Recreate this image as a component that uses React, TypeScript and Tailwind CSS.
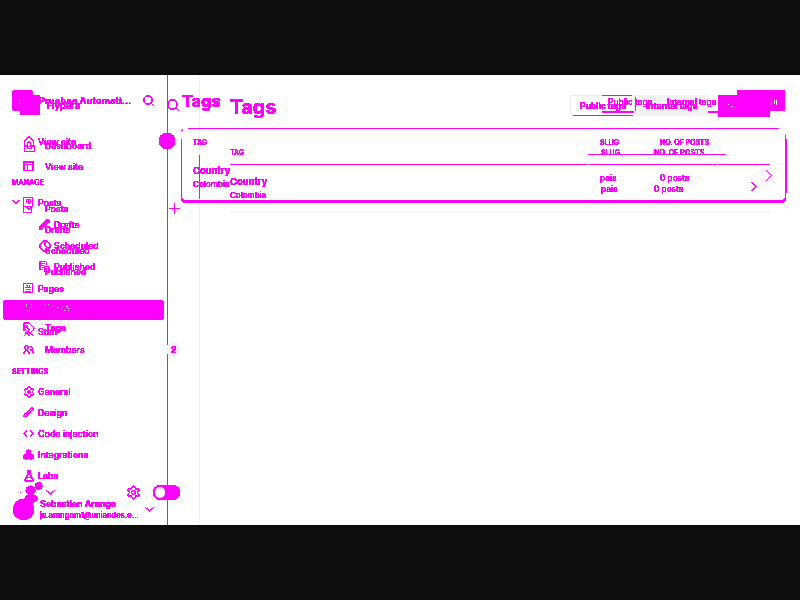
import React from 'react';
import {
  Brush, Clock, House, Search, Settings, Tag, Plus, FlaskConical,
} from 'lucide-react';

type RowProps = { icon?: React.ReactNode; label: string; sub?: boolean; lead?: React.ReactNode };

const Glyph = ({ d, size = 11 }: { d: string; size?: number }) => (
  <svg width={size} height={size} viewBox={`0 0 ${size} ${size}`} fill="none" stroke="currentColor" strokeWidth="1" shapeRendering="crispEdges">
    <path d={d} />
  </svg>
);

const PagesIcon = () => <Glyph d="M.5.5h9v9h-9zM2.500 2.500h2v2h-2M6.500 2v2.500M2 4.500h6M2.500 6.500h5M2 8h6" />;
const BrowserIcon = () => <Glyph d="M.5.5h10v9h-10zM.5 1.500h10M.5 3.500h10M4.500 3v7M1.500 1v9M9.500 1v9" />;
const PostsIcon = () => <Glyph d="M.5.5h9v9h-9zM3 2.500h5M3.500 4.500h4M4.500 6.500h2M5 3v4M3.500 3v3M7.500 3v3" />;
const EditIcon = () => <Glyph d="M.5 2v7.500h8v-5M3 4l3 3 4-4M3 3.500l3 3 4-4" />;
const PencilIcon = () => (
  <svg width="11" height="11" viewBox="0 0 11 11" fill="currentColor"><path d="M0 11V8L7 1Q9-1 10.500 1T10 3.500L3 10Z" /></svg>
);
const PublishedIcon = () => <Glyph d="M7.500 4V1M7 .5H.5v8H4M2 2.500h4M2 4.500h3M3 6.500h2M5.500 5.500h4v5h-4zM7 7.500h2M1.500 1v7" />;
const StaffIcon = () => (
  <svg width="12" height="12" viewBox="0 0 12 12" fill="none" stroke="currentColor"><path d="M1 5V2l2-1 3 2-1 3-3 1M1 10l3-3 2 3M7 7l3 2" /></svg>
);
const MembersIcon = () => (
  <svg width="12" height="11" viewBox="0 0 12 11" fill="none" stroke="currentColor" strokeWidth=".8"><path d="M3.500 1.500a1.500 2 0 1 1 0 4 1.500 2 0 1 1 0-4M1 9.500q0-3 2.500-3t2.500 3M7 2.500h1q1.500 0 1.500 1.500t-1.500 2H7M8 6q2.500 1 2.500 3.500" /></svg>
);
const CodeIcon = () => (
  <svg width="11" height="11" viewBox="0 0 11 11" fill="none" stroke="currentColor"><path d="M4 2L.8 5.500L4 9M7 2l3.200 3.500L7 9" /></svg>
);
const IntegrationsIcon = () => (
  <svg width="11" height="11" viewBox="0 0 11 11" fill="currentColor"><path d="M3 2l2.500-1.500L8 2v3l2.500 1.500v3L8 10.500 5.500 9 3 10.500.5 9.500v-3L3 5z" /></svg>
);
const DownIcon = ({ className = '' }: { className?: string }) => (
  <svg className={className} width="11" height="11" viewBox="0 0 11 11" fill="none" stroke="currentColor" strokeWidth=".9"><path d="M1.500 3.500L5.500 7L9.500 3.500" /></svg>
);
const SmallDownIcon = ({ className = '' }: { className?: string }) => (
  <svg className={className} width="11" height="11" viewBox="0 0 11 11" fill="none" stroke="currentColor"><path d="M3 3.500L6 6.500L9 3.500" /></svg>
);
const RightIcon = ({ className = '' }: { className?: string }) => (
  <svg className={`shrink-0 ${className}`} width="14" height="13" viewBox="0 0 14 13" fill="none" stroke="currentColor"><path d="M4.500 1.500L9.500 6.500L4.500 11.500" /></svg>
);

function Row({ icon, label, sub, lead }: RowProps) {
  return (
    <div className={`flex h-[21px] items-center ${sub ? 'pl-[39px]' : 'pl-[12px]'}`}>
      {!sub && <span className="flex w-[11px] shrink-0">{lead}</span>}
      <span className="flex w-[15px] shrink-0">{icon}</span>
      <span className="whitespace-nowrap">{label}</span>
    </div>
  );
}

function WideRow({ icon, label, trail, bold }: { icon?: React.ReactNode; label: string; trail?: React.ReactNode; bold?: boolean }) {
  return (
    <div className="flex h-[21px] items-center pl-[23px]">
      <span className="flex w-[22px] shrink-0">{icon}</span>
      <span className={`flex-1 whitespace-nowrap ${bold ? 'font-bold' : ''}`}>{label}</span>
      <span className="flex w-[32px] shrink-0">{trail}</span>
    </div>
  );
}

const Heading = ({ children }: { children: React.ReactNode }) => (
  <div className="flex h-[21px] items-center pl-[12px] pt-[3px] text-[7px] font-semibold tracking-[0.15px]">{children}</div>
);

function FirstLayout() {
  return (
    <div className="absolute inset-0 flex">
      <aside className="flex h-full w-[168px] shrink-0 flex-col border-r border-[#ff00ff]">
        <div className="flex h-[56px] shrink-0 items-start pl-[12px] pt-[15px]">
          <span className="h-[21px] w-[21px] rounded-[4px] bg-[#ff00ff]" />
          <span className="ml-[6px] mt-[4px] w-[103px] whitespace-nowrap text-[9px] font-bold leading-[13px] tracking-[0.25px]">Pruebas Automati...</span>
          <Search size={13} strokeWidth={1.7} className="mt-[4px]" />
        </div>
        <Row icon={<House size={12} strokeWidth={1.5} />} label="View site" />
        <div className="h-[19px]" />
        <Heading>MANAGE</Heading>
        <Row lead={<SmallDownIcon className="-ml-[2px]" />} icon={<PostsIcon />} label="Posts" />
        <div className="h-[1px]" />
        <Row sub icon={<PencilIcon />} label="Drafts" />
        <Row sub icon={<Clock size={12} strokeWidth={1.5} />} label="Scheduled" />
        <Row sub icon={<PublishedIcon />} label="Published" />
        <div className="h-[1px]" />
        <Row icon={<PagesIcon />} label="Pages" />
        <div className="mx-[3px] mt-[1px] h-[20px] shrink-0 rounded-[3px] bg-[#ff00ff]" />
        <div className="h-[1px]" />
        <Row icon={<StaffIcon />} label="Staff" />
        <div className="h-[18px]" />
        <Heading>SETTINGS</Heading>
        <Row icon={<Settings size={12} strokeWidth={1.4} />} label="General" />
        <Row icon={<Brush size={11} strokeWidth={1.7} />} label="Design" />
        <Row icon={<CodeIcon />} label="Code injection" />
        <Row icon={<IntegrationsIcon />} label="Integrations" />
        <Row icon={<FlaskConical size={12} strokeWidth={1.5} />} label="Labs" />
        <div className="flex h-[32px] shrink-0 items-center pl-[13px]">
          <span className="mt-[15px] h-[21px] w-[21px] shrink-0 rounded-full bg-[#ff00ff]" />
          <span className="ml-[5px] mt-[15px] flex w-[105px] flex-col">
            <span className="whitespace-nowrap pl-[1px] text-[8.9px] font-semibold leading-[12px]">Sebastian Arango</span>
            <span className="whitespace-nowrap pl-[1px] text-[7.7px] leading-[11px]">js.arangom1@uniandes.e...</span>
          </span>
          <DownIcon className="mt-[15px]" />
        </div>
      </aside>
      <main className="flex flex-1 flex-col pl-[13px] pr-[14px]">
        <div className="flex h-[53px] items-start pl-[1px]">
          <h1 className="w-[426px] pt-[15px] text-[16.5px] font-bold leading-[22px] tracking-[-0.2px]">Tags</h1>
          <span className="w-[59px] whitespace-nowrap pt-[21px] text-[8.5px] font-normal leading-[13px]">Public tags</span>
          <span className="w-[70px] whitespace-nowrap pt-[21px] text-[8.4px] font-normal leading-[13px]">Internal tags</span>
          <span className="mt-[15px] h-[21px] w-[48px] rounded-[1px] bg-[#ff00ff]" />
        </div>
        <div className="flex h-[75px] w-[605px] flex-col rounded-[5px] border border-b-[3px] border-[#ff00ff] px-[11px]">
          <div className="flex h-[26px] items-center pt-[2px] text-[7px] font-semibold">
            <span className="w-[407px]">TAG</span><span className="w-[60px]">SLUG</span><span>NO. OF POSTS</span>
          </div>
          <div className="flex h-[44px] items-center">
            <div className="w-[407px] shrink-0">
              <div className="text-[9.500px] font-semibold leading-[14px]">Country</div>
              <div className="text-[8.2px] font-normal leading-[13px]">Colombia</div>
            </div>
            <span className="w-[60px] shrink-0 pt-[2px] text-[8.5px] font-normal">pais</span>
            <span className="w-[102px] shrink-0 pt-[2px] text-[8.3px] font-normal">0 posts</span>
            <RightIcon className="-mt-[3px]" />
          </div>
        </div>
      </main>
    </div>
  );
}

function SecondLayout() {
  return (
    <div className="absolute inset-0 flex">
      <aside className="flex w-[199px] shrink-0 flex-col">
        <div className="flex h-[56px] items-start pl-[20px] pt-[20px]">
          <span className="h-[20px] w-[20px] rounded-[1px] bg-[#ff00ff]" />
          <span className="ml-[7px] mt-[4px] w-[119px] text-[9.500px] font-semibold leading-[13px]">Hypara</span>
          <Search size={14} strokeWidth={1.7} className="mt-[3px]" />
        </div>
        <div className="h-[4px]" />
        <WideRow icon={<Glyph size={12} d="M1 4v7.500h10v-7M1 5h3M8 5h3M4 5v3h4V5" />} label="Dashboard" />
        <WideRow icon={<BrowserIcon />} label="View site" />
        <div className="h-[21px]" />
        <WideRow icon={<EditIcon />} label="Posts" trail={<Plus size={15} strokeWidth={1.2} className="scale-110" />} />
        <WideRow label="Drafts" />
        <WideRow label="Scheduled" />
        <WideRow label="Published" />
        <div className="h-[35px]" />
        <WideRow icon={<Tag size={12} strokeWidth={1.7} />} label="Tags" bold />
        <div className="h-[1px]" />
        <WideRow icon={<MembersIcon />} label="Members" trail={<b className="ml-[4px] pt-[1px] text-[8.5px]">2</b>} />
        <div className="mt-[116px] flex h-[34px] items-center pl-[20px]">
          <svg width="26" height="26" viewBox="0 0 26 26" fill="#ff00ff"><circle cx="10.5" cy="10.500" r="4.7" /><circle cx="18.7" cy="5.8" r="3.6" /><path d="M3 20L7 15H15L18 19L12 24H3ZM0 12h1v1H0Z" /></svg>
          <DownIcon className="-ml-[1px] -mt-[1px]" />
          <Settings size={15} strokeWidth={1.4} className="-mt-[1px] ml-[70px]" />
          <span className="-mt-[1px] ml-[12px] flex h-[15px] w-[27px] rounded-full bg-[#ff00ff]" />
        </div>
      </aside>
      <main className="flex flex-1 flex-col pl-[31px] pr-[30px]">
        <div className="flex h-[72px] items-start">
          <h1 className="w-[350px] pt-[19px] text-[19.8px] font-bold leading-[26px] tracking-[-0.2px]">Tags</h1>
          <span className="w-[66px] whitespace-nowrap pt-[25px] text-[8.6px] font-semibold leading-[13px]">Public tags</span>
          <span className="w-[72px] whitespace-nowrap pt-[25px] text-[8.500px] font-semibold leading-[13px]">Internal tags</span>
          <span className="mt-[20px] h-[22px] w-[52px] bg-[#ff00ff]" />
        </div>
        <div className="flex h-[18px] items-start border-b border-[#ff00ff] text-[7px] font-medium leading-[11px]">
          <span className="w-[358px]">TAG</span>
          <span className="flex h-[8px] w-[138px] border-b border-[#ff00ff] pl-[13px]"><span className="w-[53px]">SLUG</span><span className="whitespace-nowrap tracking-[0.1px]">NO. OF POSTS</span></span>
        </div>
        <div className="flex h-[46px] items-center">
          <div className="w-[371px] pt-[1px]">
            <div className="text-[9.500px] font-semibold leading-[14px]">Country</div>
            <div className="text-[8px] font-medium leading-[13px]">Colombia</div>
          </div>
          <span className="w-[53px] pt-[2px] text-[8.5px] font-normal">pais</span>
          <span className="w-[94px] whitespace-nowrap pt-[2px] text-[8.3px] font-normal">0 posts</span>
          <RightIcon className="-ml-[1px] -mt-[3px] scale-90" />
        </div>
      </main>
    </div>
  );
}

export default function App() {
  return (
    <div className="flex h-[600px] w-[800px] flex-col overflow-hidden bg-[#0d0d0d] py-[75px]" style={{ fontFamily: 'Inter, "Liberation Sans", sans-serif' }}>
      <svg width="0" height="0" className="absolute">
        <filter id="solid" x="0" y="0" width="100%" height="100%">
          <feComponentTransfer><feFuncA type="discrete" tableValues="0 1 1 1 1 1 1 1" /></feComponentTransfer>
        </filter>
      </svg>
      <div className="relative h-[450px] w-[800px] overflow-hidden bg-white">
        <div className="absolute left-[199px] top-0 h-full w-px bg-[#eeeeee]" />
        <div className="absolute left-[570px] top-[20px] flex h-[21px] w-[138px] rounded-[2px] bg-[#f1f3f5]"><span className="h-full w-[65px] rounded-[2px] border border-[#e9ebed] bg-white" /></div>
        <div className="absolute left-[166px] top-[267px] h-[15px] w-[15px] rounded-full bg-[#f0f2f4]" />
        <div className="absolute left-[230px] top-[136px] h-[2px] w-[540px] bg-[#f5f5f5]" />
        <div className="absolute left-[20px] top-[406px] h-[22px] w-[22px] rounded-full border border-[#f5f5f5]" />
        <div className="absolute inset-0 text-[8.8px] font-medium text-[#ff00ff] [filter:url(#solid)]">
          <FirstLayout />
          <SecondLayout />
          <span className="absolute left-[159px] top-[58px] h-[16px] w-[16px] rounded-full bg-[#ff00ff]" />
          <span className="absolute left-[573px] top-[40px] h-px w-[60px] bg-[#ff00ff]" />
          <span className="absolute left-[602px] top-[20px] h-px w-[30px] bg-[#ff00ff]" />
          <span className="absolute left-[602px] top-[36px] h-[2px] w-[32px] bg-[#ff00ff]" />
          <span className="absolute left-[635px] top-[22px] h-[14px] w-px bg-[#ff00ff]" />
          <span className="absolute left-[708px] top-[36px] h-[2px] w-[12px] bg-[#ff00ff]" />
          <span className="absolute left-[199px] top-[80px] h-[44px] w-px bg-[#ff00ff]" />
          <span className="absolute left-[785px] top-[64px] h-[54px] w-[2px] bg-[#ff00ff]" />
        </div>
        <span className="absolute left-[167px] top-[270px] h-[9px] w-px bg-[#f0f2f4]" />
        <span className="absolute left-[155px] top-[412px] h-[11px] w-[10px] rounded-full bg-white" />
        <svg className="absolute left-0 top-0" width="800" height="450" fill="white" shapeRendering="crispEdges">
          <path d="M183 53h5v2h-5zM181 56h2v8h-2zM779 53h8v7h-8zM588 89h1v1h-1zM717 89h1v1h-1z" />
          <path d="M26 229h1v1h-1zM31 229h1v1h-1zM26 231h1v1h-1zM30 232h1v1h-1zM27 235h1v1h-1zM29 236h1v1h-1zM45 229h1v1h-1zM48 229h1v1h-1zM53 231h1v1h-1zM57 232h2v1h-2zM61 233h1v1h-1zM63 231h1v1h-1zM66 231h2v1h-2zM64 235h1v1h-1zM67 233h2v1h-2zM68 235h1v1h-1zM19 25h1v1h-1zM19 28h1v1h-1zM728 29h1v1h-1zM731 31h2v1h-2zM735 32h1v1h-1zM771 27h1v3h-1zM774 25h1v4h-1zM776 25h1v5h-1z" />
        </svg>
      </div>
    </div>
  );
}
